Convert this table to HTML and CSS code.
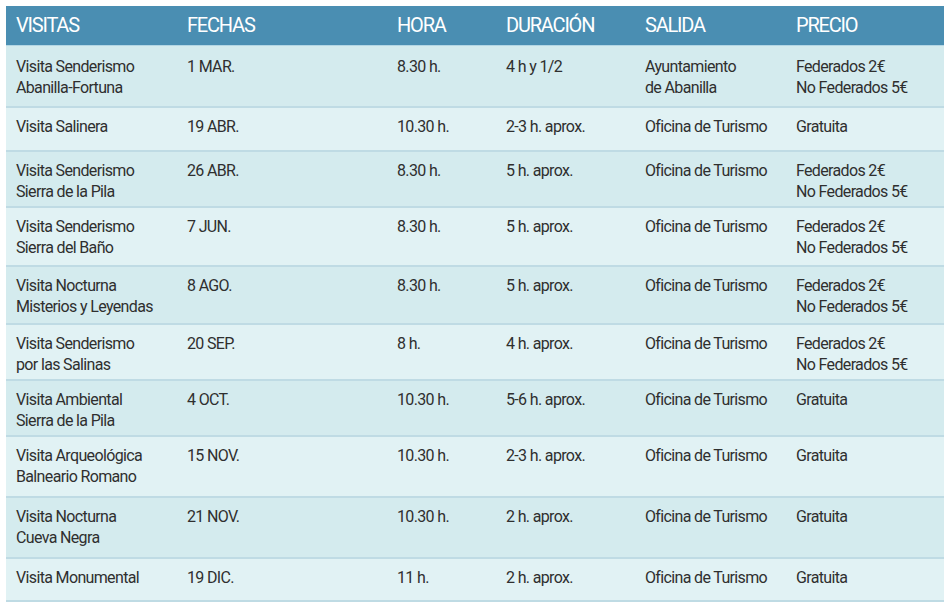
FILE: index.html
```html
<!DOCTYPE html>
<html lang="es">
<head>
<meta charset="utf-8">
<link rel="stylesheet" href="styles.css">
</head>
<body>
<div class="page">
<table class="visits">
  <colgroup>
    <col class="c1"><col class="c2"><col class="c3"><col class="c4"><col class="c5"><col class="c6">
  </colgroup>
  <thead>
    <tr><th>VISITAS</th><th>FECHAS</th><th>HORA</th><th>DURACIÓN</th><th>SALIDA</th><th>PRECIO</th></tr>
  </thead>
  <tbody>
    <tr class="dark h61 first"><td>Visita Senderismo<br>Abanilla-Fortuna</td><td>1 MAR.</td><td>8.30 h.</td><td>4 h y 1/2</td><td>Ayuntamiento<br>de Abanilla</td><td>Federados 2€<br>No Federados 5€</td></tr>
    <tr class="light h44"><td>Visita Salinera</td><td>19 ABR.</td><td>10.30 h.</td><td>2-3 h. aprox.</td><td>Oficina de Turismo</td><td>Gratuita</td></tr>
    <tr class="dark h56"><td>Visita Senderismo<br>Sierra de la Pila</td><td>26 ABR.</td><td>8.30 h.</td><td>5 h. aprox.</td><td>Oficina de Turismo</td><td>Federados 2€<br>No Federados 5€</td></tr>
    <tr class="light h59"><td>Visita Senderismo<br>Sierra del Baño</td><td>7 JUN.</td><td>8.30 h.</td><td>5 h. aprox.</td><td>Oficina de Turismo</td><td>Federados 2€<br>No Federados 5€</td></tr>
    <tr class="dark h58"><td>Visita Nocturna<br>Misterios y Leyendas</td><td>8 AGO.</td><td>8.30 h.</td><td>5 h. aprox.</td><td>Oficina de Turismo</td><td>Federados 2€<br>No Federados 5€</td></tr>
    <tr class="light h56"><td>Visita Senderismo<br>por las Salinas</td><td>20 SEP.</td><td>8 h.</td><td>4 h. aprox.</td><td>Oficina de Turismo</td><td>Federados 2€<br>No Federados 5€</td></tr>
    <tr class="dark h56"><td>Visita Ambiental<br>Sierra de la Pila</td><td>4 OCT.</td><td>10.30 h.</td><td>5-6 h. aprox.</td><td>Oficina de Turismo</td><td>Gratuita</td></tr>
    <tr class="light h61"><td>Visita Arqueológica<br>Balneario Romano</td><td>15 NOV.</td><td>10.30 h.</td><td>2-3 h. aprox.</td><td>Oficina de Turismo</td><td>Gratuita</td></tr>
    <tr class="dark h61"><td>Visita Nocturna<br>Cueva Negra</td><td>21 NOV.</td><td>10.30 h.</td><td>2 h. aprox.</td><td>Oficina de Turismo</td><td>Gratuita</td></tr>
    <tr class="light h43 last"><td>Visita Monumental</td><td>19 DIC.</td><td>11 h.</td><td>2 h. aprox.</td><td>Oficina de Turismo</td><td>Gratuita</td></tr>
  </tbody>
</table>
</div>
</body>
</html>
```
FILE: styles.css
```css
html, body {
  margin: 0;
  padding: 0;
  background: #ffffff;
}
.page {
  padding: 6px 7px 0 6px;
}
.visits {
  width: 938px;
  border-collapse: collapse;
  table-layout: fixed;
  font-family: Roboto, "Liberation Sans", sans-serif;
  color: #2f2f2f;
}
.c1 { width: 171px; }
.c2 { width: 210px; }
.c3 { width: 109px; }
.c4 { width: 139px; }
.c5 { width: 151px; }
.c6 { width: 158px; }

.visits th {
  background: #4a8eb2;
  color: #ffffff;
  font-weight: normal;
  font-size: 20px;
  letter-spacing: -1.2px;
  text-align: left;
  height: 39px;
  padding: 0 0 0 10px;
  box-sizing: border-box;
  vertical-align: middle;
  line-height: 39px;
}
.visits td {
  font-size: 16px;
  letter-spacing: -0.65px;
  line-height: 21px;
  padding: 8px 4px 0 10px;
  vertical-align: top;
  box-sizing: border-box;
  white-space: nowrap;
}
.visits tbody tr {
  border-top: 2px solid #bfdbe4;
}
.visits tbody tr.first {
  border-top: 1px solid #b3d6e4;
}
.visits tbody tr.first td {
  padding-top: 10px;
}
.visits tbody tr.last {
  border-bottom: 2px solid #bfdbe4;
}
.dark { background: #d4ebee; }
.light { background: #e1f2f4; }
.h61 { height: 61px; }
.h59 { height: 59px; }
.h58 { height: 58px; }
.h56 { height: 56px; }
.h44 { height: 44px; }
.h43 { height: 43px; }
```
